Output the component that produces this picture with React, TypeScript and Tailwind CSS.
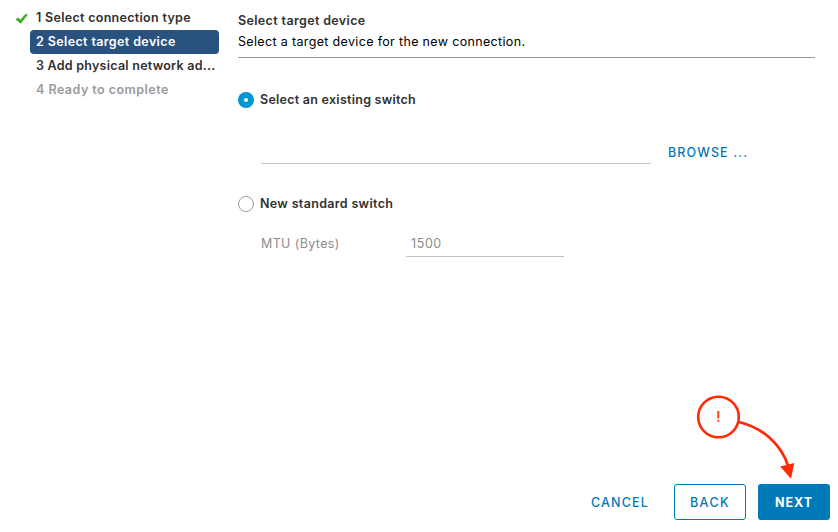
const steps = [
  { label: "1 Select connection type", row: "text-[#313131]", text: "tracking-[0.3px]", done: true },
  { label: "2 Select target device", row: "bg-[#29527f] text-white", text: "tracking-[0.38px]", done: false },
  { label: "3 Add physical network ad...", row: "text-[#313131]", text: "tracking-[0.25px]", done: false },
  { label: "4 Ready to complete", row: "text-[#9a9a9a]", text: "tracking-[0.47px]", done: false },
];

function CheckMark() {
  return (
    <svg className="mt-px block" width="14" height="12" viewBox="0 0 14 12">
      <path d="M1.2 6.4 3 4.9l2.3 2.3L11.2.9l1 .9-6.6 8.4Z" fill="#3cb521" stroke="#259a13" strokeWidth="0.8" strokeLinejoin="round" />
    </svg>
  );
}

function Steps() {
  return (
    <nav className="w-[219px] shrink-0 pt-1.5">
      {steps.map((s) => (
        <div key={s.label} className="flex h-6 items-center">
          <div className="w-[30px] shrink-0 pl-[15px]">{s.done && <CheckMark />}</div>
          <div className={`h-6 w-[189px] rounded pl-1.5 leading-[23px] font-semibold whitespace-nowrap ${s.row}`}>
            <span className={s.text}>{s.label}</span>
          </div>
        </div>
      ))}
    </nav>
  );
}

function Pointer() {
  return (
    <svg className="pointer-events-none absolute top-[390px] left-[690px]" width="115" height="95" viewBox="0 0 115 95">
      <circle cx="28.5" cy="27" r="20.3" fill="none" stroke="#ff2a06" strokeWidth="2.6" />
      <path d="M49 32C73 38 91 54 98.2 76" fill="none" stroke="#ff2a06" strokeWidth="2.8" />
      <path d="M90.2 76.5 104.3 73 101 88.7Z" fill="#ff2a06" />
      <text x="28.3" y="32.2" textAnchor="middle" fontFamily="Inter, sans-serif" fontSize="14" fontWeight="700" fill="#ff4a2c">!</text>
    </svg>
  );
}

export default function App() {
  return (
    <div className="relative flex h-[532px] w-[838px] flex-col overflow-hidden bg-white font-['Inter',sans-serif] text-[12.5px] leading-6 text-black">
      <div className="flex flex-1">
        <Steps />
        <main className="ml-[19px] w-[577px]">
          <header className="h-[58px] border-b border-[#9a9a9a] pt-2.5">
            <h1 className="h-[21px] leading-[21px] font-semibold text-[#313131]"><span className="tracking-[0.36px]">Select target device</span></h1>
            <p className="h-[21px] leading-[21px]"><span className="tracking-[0.34px]">Select a target device for the new connection.</span></p>
          </header>
          <label className="mt-[30px] flex h-6 items-center">
            <span className="flex size-4 items-center justify-center rounded-full bg-[#0095d3]">
              <span className="size-1 rounded-full bg-white" />
            </span>
            <span className="ml-1.5 h-6 leading-[23px] font-semibold tracking-[0.26px] text-[#313131]">Select an existing switch</span>
          </label>
          <div className="mt-7 flex h-6 pl-[23px]">
            <div className="w-[390px] border-b border-[#c1c1c1]" />
            <button className="ml-[17px] h-[26px] leading-[26px] font-medium text-[#0079b8]"><span className="tracking-[1.15px]">BROWSE ...</span></button>
          </div>
          <label className="mt-7 flex h-6 items-center">
            <span className="size-4 rounded-full border border-[#9a9a9a]" />
            <span className="ml-1.5 h-6 leading-[23px] font-semibold tracking-[0.33px] text-[#313131]">New standard switch</span>
          </label>
          <div className="mt-4 flex pl-[23px] text-[#8c8c8c]">
            <span className="h-[25px] w-[145px] leading-[23px] tracking-[0.38px]">MTU (Bytes)</span>
            <span className="h-[25px] w-[158px] border-b border-[#c1c1c1] pl-[5px] leading-[23px] tracking-[0.6px]">1500</span>
          </div>
        </main>
      </div>
      <footer className="mb-3 flex h-9 justify-end gap-3 pr-2 font-medium text-[#0079b8]">
        <button className="flex w-[85px] items-center justify-center pt-0.5 pl-px"><span className="tracking-[1.2px]">CANCEL</span></button>
        <button className="flex w-[72px] items-center justify-center rounded-[3px] border border-[#0079b8] pt-0.5"><span className="tracking-[1.4px]">BACK</span></button>
        <button className="flex w-[72px] items-center justify-center rounded-[3px] bg-[#0079b8] pt-0.5 font-bold text-white"><span className="tracking-[0.9px]">NEXT</span></button>
      </footer>
      <Pointer />
    </div>
  );
}
